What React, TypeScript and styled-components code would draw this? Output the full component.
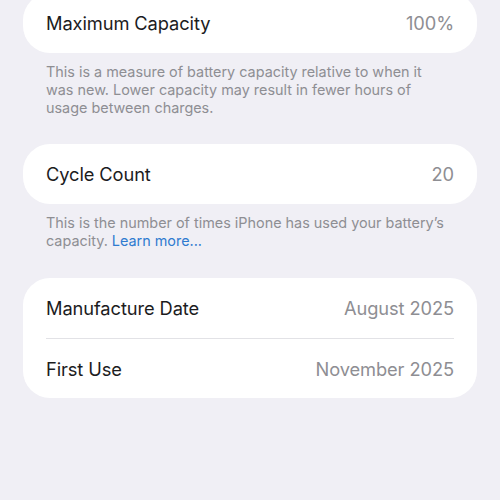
import React from "react";
import styled, { createGlobalStyle } from "styled-components";

const GlobalStyle = createGlobalStyle`
  html, body {
    margin: 0;
    padding: 0;
    background: #f0eff5;
  }
  body {
    font-family: Inter, "Noto Sans", sans-serif;
    -webkit-font-smoothing: antialiased;
  }
`;

const Page = styled.div`
  width: 500px;
  height: 500px;
  overflow: hidden;
  background: #f0eff5;
  padding: 0 23px;
  box-sizing: border-box;
`;

const Content = styled.div`
  margin-top: -7px;
  display: flex;
  flex-direction: column;
`;

const Section = styled.div<{ $gap?: number }>`
  display: flex;
  flex-direction: column;
  margin-bottom: ${(p) => p.$gap ?? 27}px;
`;

const Card = styled.div`
  background: #ffffff;
  border-radius: 27px;
  padding: 0 23px;
`;

const Row = styled.div<{ $divider?: boolean }>`
  display: flex;
  justify-content: space-between;
  align-items: center;
  height: 59.5px;
  border-bottom: ${(p) => (p.$divider ? "1px solid #e2e2e6" : "none")};
`;

const Label = styled.span`
  font-size: 18.3px;
  color: #1c1c1e;
  letter-spacing: -0.1px;
`;

const Value = styled.span`
  font-size: 18.3px;
  color: #8e8e93;
  letter-spacing: -0.1px;
`;

const Footer = styled.p`
  margin: 0;
  padding: 10px 23px 0;
  font-size: 14.4px;
  line-height: 18.3px;
  color: #8e8e93;
`;

const Link = styled.a`
  color: #2f7bd0;
  text-decoration: none;
`;

export default function App() {
  return (
    <Page>
      <GlobalStyle />
      <Content>
        <Section>
          <Card>
            <Row>
              <Label>Maximum Capacity</Label>
              <Value>100%</Value>
            </Row>
          </Card>
          <Footer>
            This is a measure of battery capacity relative to when it
            <br />
            was new. Lower capacity may result in fewer hours of
            <br />
            usage between charges.
          </Footer>
        </Section>
        <Section $gap={28}>
          <Card>
            <Row>
              <Label>Cycle Count</Label>
              <Value>20</Value>
            </Row>
          </Card>
          <Footer>
            This is the number of times iPhone has used your battery’s
            <br />
            capacity. <Link href="#">Learn more...</Link>
          </Footer>
        </Section>
        <Section>
          <Card>
            <Row $divider>
              <Label>Manufacture Date</Label>
              <Value>August 2025</Value>
            </Row>
            <Row>
              <Label>First Use</Label>
              <Value>November 2025</Value>
            </Row>
          </Card>
        </Section>
      </Content>
    </Page>
  );
}
